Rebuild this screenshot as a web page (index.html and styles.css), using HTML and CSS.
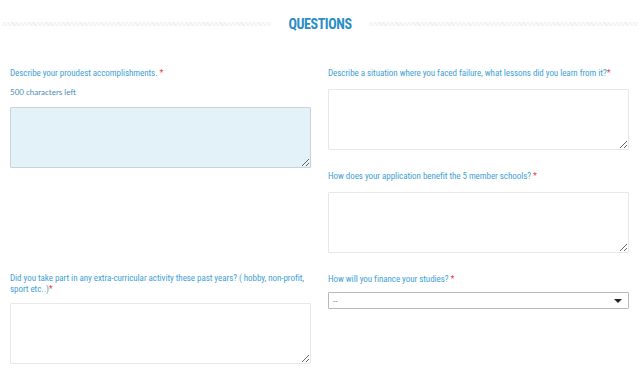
FILE: index.html
```html
<!DOCTYPE html>
<html lang="en">
<head>
<meta charset="utf-8">
<title>Questions</title>
<link rel="stylesheet" href="styles.css">
</head>
<body>
<header class="section-title">
  <span class="rule"></span>
  <h2 class="title">QUESTIONS</h2>
  <span class="rule"></span>
</header>
<form class="grid">
  <div class="col">
    <div class="field">
      <label class="label">Describe your proudest accomplishments. <span class="req">*</span></label>
      <div class="counter">500 characters left</div>
      <textarea class="area area-active"></textarea>
    </div>
  </div>
  <div class="col">
    <div class="field">
      <label class="label">Describe a situation where you faced failure, what lessons did you learn from it?<span class="req">*</span></label>
      <textarea class="area"></textarea>
    </div>
    <div class="field">
      <label class="label">How does your application benefit the 5 member schools? <span class="req">*</span></label>
      <textarea class="area"></textarea>
    </div>
  </div>
  <div class="col">
    <div class="field">
      <label class="label label-wrap">Did you take part in any extra-curricular activity these past years? ( hobby, non-profit, sport etc..)<span class="req">*</span></label>
      <textarea class="area area-tight"></textarea>
    </div>
  </div>
  <div class="col">
    <div class="field">
      <label class="label">How will you finance your studies? <span class="req">*</span></label>
      <div class="select"><span class="select-value">--</span><span class="caret"></span></div>
    </div>
  </div>
</form>
</body>
</html>
```

FILE: styles.css
```css
html, body {
  margin: 0;
  padding: 0;
  background: #ffffff;
}
body {
  font-family: "Liberation Sans Narrow", "Roboto Condensed", Roboto, "Liberation Sans", sans-serif;
  width: 640px;
  height: 372px;
  overflow: hidden;
}
.section-title {
  display: flex;
  align-items: center;
  gap: 17px;
  padding: 16px 2px 0;
  height: 16px;
}
.rule {
  flex: 1;
  height: 4px;
  background: repeating-linear-gradient(45deg, #efefef 0 1px, #fafafa 1px 3px);
}
.title {
  margin: 0;
  font-size: 14px;
  line-height: 16px;
  font-weight: 700;
  color: #2b8dc6;
  letter-spacing: -0.4px;
}
.grid {
  display: grid;
  grid-template-columns: 1fr 1fr;
  column-gap: 17px;
  padding: 0 11px 0 10px;
  margin-top: 35px;
}
.col {
  display: flex;
  flex-direction: column;
}
.field {
  display: flex;
  flex-direction: column;
  margin-bottom: 20px;
}
.label {
  font-size: 9px;
  line-height: 11px;
  letter-spacing: -0.05px;
  color: #3f9fd5;
  padding-top: 1px;
}
.label-wrap {
  line-height: 11px;
  padding-top: 0;
}
.req {
  color: #e8434a;
}
.counter {
  font-family: Lato, "Open Sans", sans-serif;
  font-size: 8px;
  line-height: 10px;
  color: #4a8db6;
  margin-top: 8px;
}
.area {
  display: block;
  box-sizing: border-box;
  width: 100%;
  height: 61px;
  margin: 10px 0 0;
  border: 1px solid #e8e8e8;
  border-radius: 1px;
  background: #ffffff;
  font: inherit;
}
.area-active {
  background: #e3f2f8;
  border-color: #c9d3d8;
}
.area-tight {
  margin-top: 8px;
}
.select {
  position: relative;
  box-sizing: border-box;
  height: 17px;
  margin-top: 7px;
  border: 1px solid #b8b8b8;
  border-radius: 1px;
  background: #ffffff;
  display: flex;
  align-items: center;
  padding: 0 4px;
}
.select-value {
  font-size: 9px;
  color: #4aa3d8;
}
.caret {
  position: absolute;
  right: 6px;
  top: 6px;
  width: 0;
  height: 0;
  border-left: 4px solid transparent;
  border-right: 4px solid transparent;
  border-top: 4px solid #222;
}
```
